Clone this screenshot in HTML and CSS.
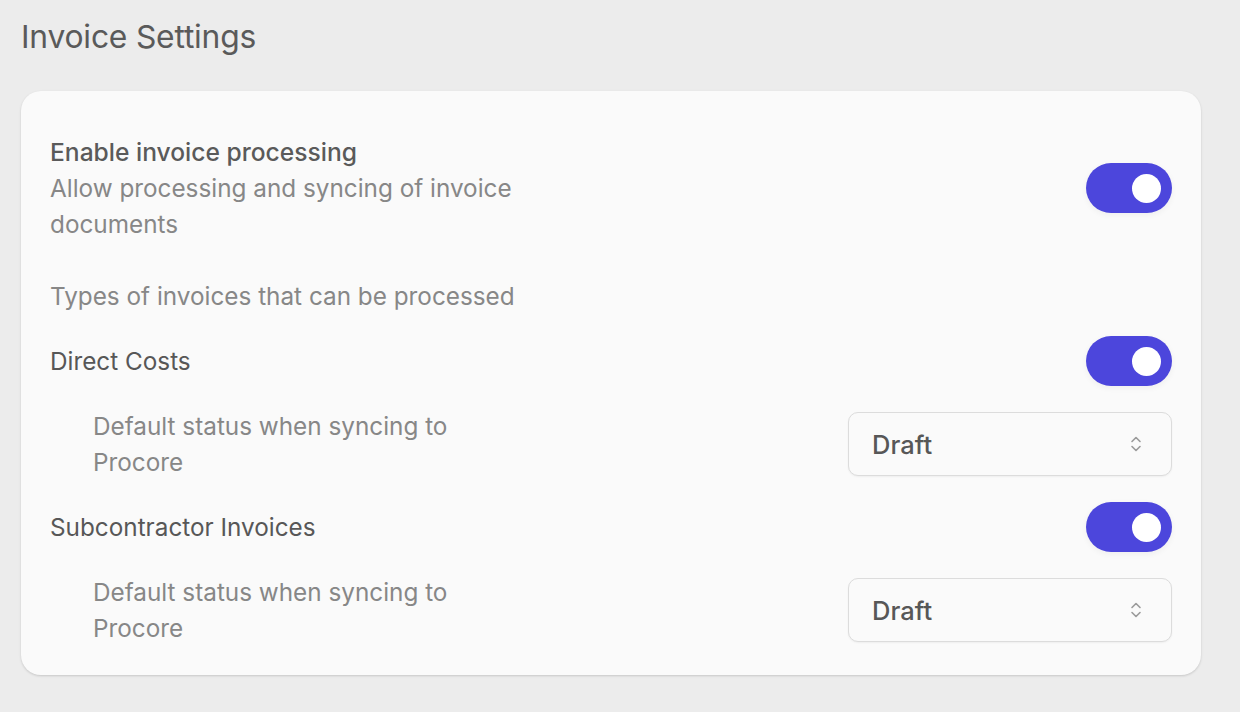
FILE: index.html
```html
<!DOCTYPE html>
<html lang="en">
<head>
<meta charset="utf-8">
<title>Invoice Settings</title>
<link rel="stylesheet" href="styles.css">
</head>
<body>
<div class="page">
  <h1 class="page-title">Invoice Settings</h1>
  <section class="card">
    <div class="row row-main">
      <div class="label-block">
        <div class="label strong">Enable invoice processing</div>
        <div class="desc">Allow processing and syncing of invoice documents</div>
      </div>
      <span class="toggle on"><span class="knob"></span></span>
    </div>

    <div class="section-label desc">Types of invoices that can be processed</div>

    <div class="row">
      <div class="label">Direct Costs</div>
      <span class="toggle on"><span class="knob"></span></span>
    </div>
    <div class="row sub-row">
      <div class="desc sub-label">Default status when syncing to Procore</div>
      <div class="select">
        <span class="select-value">Draft</span>
        <svg class="chevrons" width="12" height="18" viewBox="0 0 12 18" fill="none" stroke="currentColor" stroke-width="1.6" stroke-linecap="round" stroke-linejoin="round"><path d="M2 6.5 L6 2.5 L10 6.5"/><path d="M2 11.5 L6 15.5 L10 11.5"/></svg>
      </div>
    </div>

    <div class="row">
      <div class="label">Subcontractor Invoices</div>
      <span class="toggle on"><span class="knob"></span></span>
    </div>
    <div class="row sub-row">
      <div class="desc sub-label">Default status when syncing to Procore</div>
      <div class="select">
        <span class="select-value">Draft</span>
        <svg class="chevrons" width="12" height="18" viewBox="0 0 12 18" fill="none" stroke="currentColor" stroke-width="1.6" stroke-linecap="round" stroke-linejoin="round"><path d="M2 6.5 L6 2.5 L10 6.5"/><path d="M2 11.5 L6 15.5 L10 11.5"/></svg>
      </div>
    </div>
  </section>
</div>
</body>
</html>
```
FILE: styles.css
```css
* { box-sizing: border-box; }
html, body { margin: 0; padding: 0; }
body {
  background: #ececec;
  font-family: Inter, "Noto Sans", "Liberation Sans", sans-serif;
  color: #555555;
  width: 1240px;
  height: 712px;
  overflow: hidden;
}
.page {
  padding: 17px 39px 0 21px;
}
.page-title {
  margin: 0;
  font-size: 31.8px;
  font-weight: 400;
  line-height: 40px;
  color: #5a5a5a;
  letter-spacing: -0.2px;
}
.card {
  margin-top: 34px;
  background: #fafafa;
  border-radius: 20px;
  box-shadow: 0 1px 3px rgba(0,0,0,0.10), 0 1px 2px rgba(0,0,0,0.06);
  padding: 43px 29px 29px 29px;
  display: flex;
  flex-direction: column;
  gap: 22px;
}
.row {
  display: flex;
  align-items: center;
  justify-content: space-between;
}
.label-block { max-width: 500px; }
.label, .desc {
  font-size: 24.3px;
  line-height: 36px;
}
.label { color: #575757; }
.label.strong { font-weight: 500; font-size: 24.6px; color: #5a5a5a; }
.desc { color: #878787; }
.section-label { margin-top: 14px; }
.sub-row { padding-left: 43px; }
.sub-label { max-width: 420px; }
.toggle {
  width: 86px;
  height: 50px;
  border-radius: 25px;
  background: #4c46dc;
  display: flex;
  align-items: center;
  justify-content: flex-end;
  padding-right: 11px;
  box-shadow: 0 2px 6px rgba(0,0,0,0.05);
  flex: none;
}
.knob {
  width: 29px;
  height: 29px;
  border-radius: 50%;
  background: #ffffff;
}
.select {
  width: 324px;
  height: 64px;
  border: 1px solid #dcdcdc;
  border-radius: 10px;
  background: #fafafa;
  box-shadow: 0 1px 2px rgba(0,0,0,0.05);
  display: flex;
  align-items: center;
  justify-content: space-between;
  padding: 0 29px 0 23px;
  flex: none;
}
.select-value {
  font-size: 25.5px;
  font-weight: 500;
  color: #575757;
}
.chevrons { color: #9a9a9a; }
```
